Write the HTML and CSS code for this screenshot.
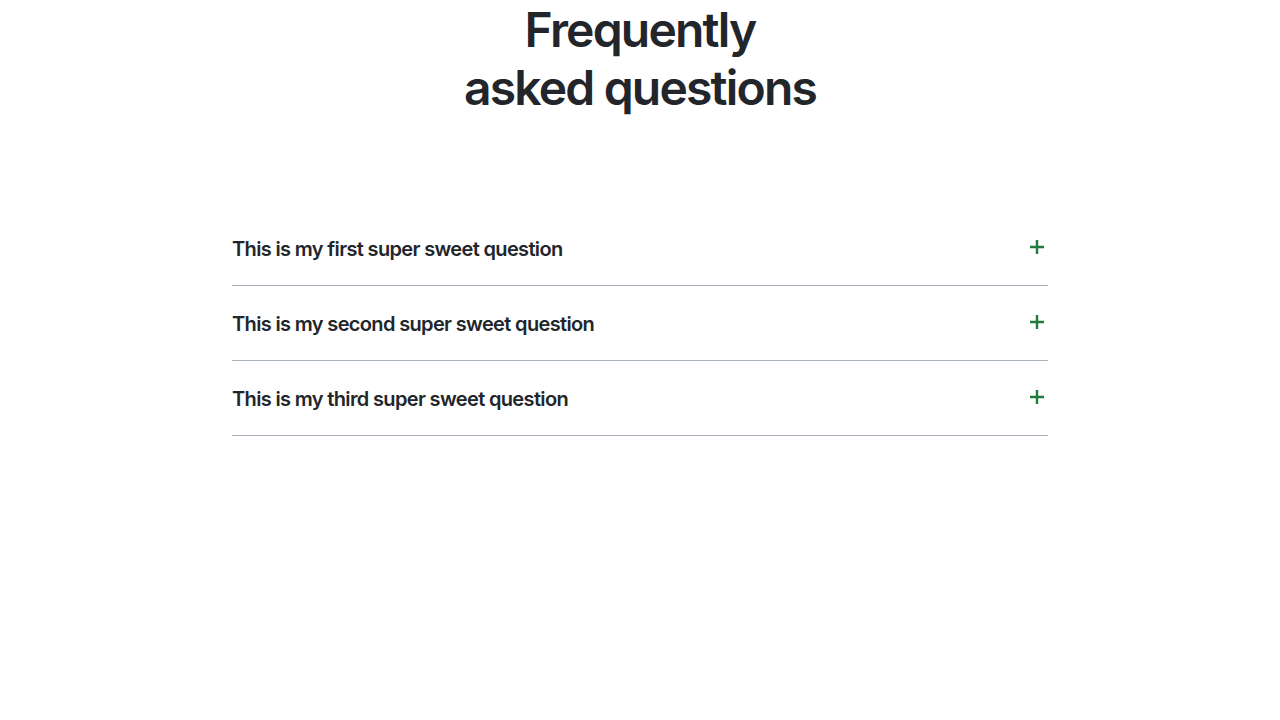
FILE: index.html
```html
<!DOCTYPE html>
<html lang="en">
<head>
<meta charset="utf-8">
<title>FAQ</title>
<link rel="stylesheet" href="styles.css">
</head>
<body>
<section class="faq">
  <h1 class="faq-title">Frequently<br>asked questions</h1>
  <div class="faq-list">
    <div class="faq-item">
      <span class="faq-q">This is my first super sweet question</span>
      <svg class="faq-icon" viewBox="0 0 16 16" width="16" height="16"><path d="M8 1v14M1 8h14" stroke="#1f7a3d" stroke-width="2.4" fill="none"/></svg>
    </div>
    <div class="faq-item">
      <span class="faq-q">This is my second super sweet question</span>
      <svg class="faq-icon" viewBox="0 0 16 16" width="16" height="16"><path d="M8 1v14M1 8h14" stroke="#1f7a3d" stroke-width="2.4" fill="none"/></svg>
    </div>
    <div class="faq-item">
      <span class="faq-q">This is my third super sweet question</span>
      <svg class="faq-icon" viewBox="0 0 16 16" width="16" height="16"><path d="M8 1v14M1 8h14" stroke="#1f7a3d" stroke-width="2.4" fill="none"/></svg>
    </div>
  </div>
</section>
</body>
</html>
```
FILE: styles.css
```css
html, body {
  margin: 0;
  padding: 0;
  background: #ffffff;
}
body {
  font-family: Inter, "Noto Sans", sans-serif;
  color: #22262b;
}
.faq {
  width: 816px;
  margin: 0 auto;
  display: flex;
  flex-direction: column;
}
.faq-title {
  margin: 0;
  padding-top: 1px;
  text-align: center;
  font-size: 48px;
  line-height: 58px;
  font-weight: 600;
  letter-spacing: -1.8px;
}
.faq-list {
  margin-top: 94px;
  display: flex;
  flex-direction: column;
}
.faq-item {
  height: 74px;
  border-bottom: 1px solid #a9b3bd;
  display: flex;
  align-items: center;
  justify-content: space-between;
}
.faq-q {
  font-size: 20px;
  font-weight: 600;
  letter-spacing: -0.65px;
  padding-top: 1px;
}
.faq-icon {
  margin-right: 3px;
  margin-bottom: 2px;
}
```
